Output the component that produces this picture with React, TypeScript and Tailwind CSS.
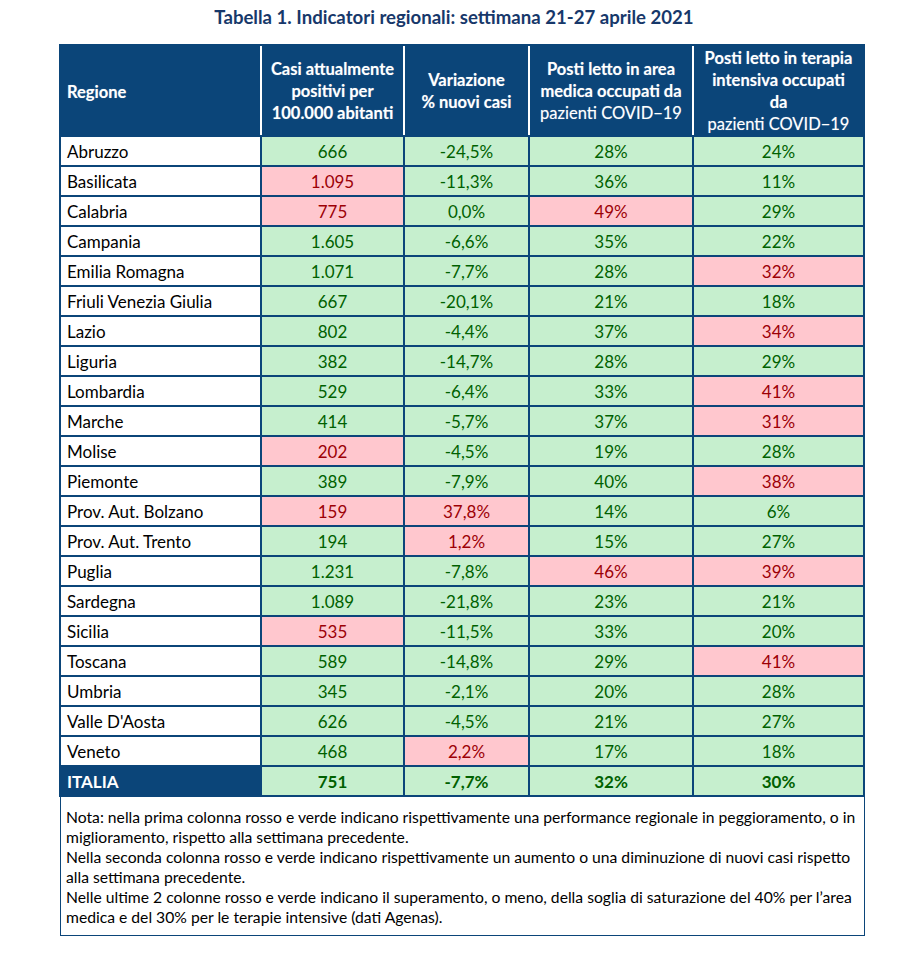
import React from 'react';

type Tone = 'g' | 'r';
type Cell = [string, Tone];

interface Row {
    regione: string;
    cells: Cell[];
}

const rows: Row[] = [
    { regione: 'Abruzzo', cells: [['666', 'g'], ['-24,5%', 'g'], ['28%', 'g'], ['24%', 'g']] },
    { regione: 'Basilicata', cells: [['1.095', 'r'], ['-11,3%', 'g'], ['36%', 'g'], ['11%', 'g']] },
    { regione: 'Calabria', cells: [['775', 'r'], ['0,0%', 'g'], ['49%', 'r'], ['29%', 'g']] },
    { regione: 'Campania', cells: [['1.605', 'g'], ['-6,6%', 'g'], ['35%', 'g'], ['22%', 'g']] },
    { regione: 'Emilia Romagna', cells: [['1.071', 'g'], ['-7,7%', 'g'], ['28%', 'g'], ['32%', 'r']] },
    { regione: 'Friuli Venezia Giulia', cells: [['667', 'g'], ['-20,1%', 'g'], ['21%', 'g'], ['18%', 'g']] },
    { regione: 'Lazio', cells: [['802', 'g'], ['-4,4%', 'g'], ['37%', 'g'], ['34%', 'r']] },
    { regione: 'Liguria', cells: [['382', 'g'], ['-14,7%', 'g'], ['28%', 'g'], ['29%', 'g']] },
    { regione: 'Lombardia', cells: [['529', 'g'], ['-6,4%', 'g'], ['33%', 'g'], ['41%', 'r']] },
    { regione: 'Marche', cells: [['414', 'g'], ['-5,7%', 'g'], ['37%', 'g'], ['31%', 'r']] },
    { regione: 'Molise', cells: [['202', 'r'], ['-4,5%', 'g'], ['19%', 'g'], ['28%', 'g']] },
    { regione: 'Piemonte', cells: [['389', 'g'], ['-7,9%', 'g'], ['40%', 'g'], ['38%', 'r']] },
    { regione: 'Prov. Aut. Bolzano', cells: [['159', 'r'], ['37,8%', 'r'], ['14%', 'g'], ['6%', 'g']] },
    { regione: 'Prov. Aut. Trento', cells: [['194', 'g'], ['1,2%', 'r'], ['15%', 'g'], ['27%', 'g']] },
    { regione: 'Puglia', cells: [['1.231', 'g'], ['-7,8%', 'g'], ['46%', 'r'], ['39%', 'r']] },
    { regione: 'Sardegna', cells: [['1.089', 'g'], ['-21,8%', 'g'], ['23%', 'g'], ['21%', 'g']] },
    { regione: 'Sicilia', cells: [['535', 'r'], ['-11,5%', 'g'], ['33%', 'g'], ['20%', 'g']] },
    { regione: 'Toscana', cells: [['589', 'g'], ['-14,8%', 'g'], ['29%', 'g'], ['41%', 'r']] },
    { regione: 'Umbria', cells: [['345', 'g'], ['-2,1%', 'g'], ['20%', 'g'], ['28%', 'g']] },
    { regione: "Valle D'Aosta", cells: [['626', 'g'], ['-4,5%', 'g'], ['21%', 'g'], ['27%', 'g']] },
    { regione: 'Veneto', cells: [['468', 'g'], ['2,2%', 'r'], ['17%', 'g'], ['18%', 'g']] },
];

const italia: Cell[] = [['751', 'g'], ['-7,7%', 'g'], ['32%', 'g'], ['30%', 'g']];

const cols = 'grid grid-cols-[199px_141px_123px_162px_169px]';

const toneClass = (tone: Tone) =>
    tone === 'g' ? 'bg-[#c6efce] text-[#006100]' : 'bg-[#ffc7ce] text-[#9c0006]';

const noteLines = [
    'Nota: nella prima colonna rosso e verde indicano rispettivamente una performance regionale in peggioramento, o in',
    'miglioramento, rispetto alla settimana precedente.',
    'Nella seconda colonna rosso e verde indicano rispettivamente un aumento o una diminuzione di nuovi casi rispetto',
    'alla settimana precedente.',
    'Nelle ultime 2 colonne rosso e verde indicano il superamento, o meno, della soglia di saturazione del 40% per l\u2019area',
    'medica e del 30% per le terapie intensive (dati Agenas).',
];

const App: React.FC = () => {
    return (
        <div className="w-[908px] h-[964px] bg-white font-['Lato',sans-serif] text-black">
            <h1 className="h-[44px] pt-[4px] text-center text-[18.6px] font-bold text-[#17386a] leading-[26px]">
                Tabella 1. Indicatori regionali: settimana 21-27 aprile 2021
            </h1>

            <div className="ml-[59px] w-[806px]">
                {/* header */}
                <div className="bg-[#0b4579] p-[2px]">
                    <div className={`${cols} h-[89px] gap-x-[2px] bg-white text-white text-[16.5px] leading-[22px] [text-shadow:0_0_1px_rgba(255,255,255,0.4)]`}>
                        <div className="bg-[#0b4579] flex items-center pl-[6px] pt-[2px] font-bold">Regione</div>
                        <div className="bg-[#0b4579] flex items-center justify-center text-center font-bold">
                            Casi attualmente<br />positivi per<br />100.000 abitanti
                        </div>
                        <div className="bg-[#0b4579] flex items-center justify-center text-center font-bold">
                            Variazione<br />% nuovi casi
                        </div>
                        <div className="bg-[#0b4579] flex flex-col items-center justify-center text-center">
                            <span className="font-bold">Posti letto in area</span>
                            <span className="font-bold">medica occupati da</span>
                            <span>pazienti COVID−19</span>
                        </div>
                        <div className="bg-[#0b4579] flex flex-col items-center justify-center text-center">
                            <span className="font-bold">Posti letto in terapia</span>
                            <span className="font-bold">intensiva occupati</span>
                            <span className="font-bold">da</span>
                            <span>pazienti COVID−19</span>
                        </div>
                    </div>
                </div>

                {/* body */}
                <div className={`${cols} gap-[2px] bg-[#0b4579] px-[2px] pb-[2px] text-[17px]`}>
                    {rows.map(row => (
                        <React.Fragment key={row.regione}>
                            <div className="h-[28px] bg-white flex items-center pl-[6px] pt-[2px] whitespace-nowrap">{row.regione}</div>
                            {row.cells.map(([value, tone], i) => (
                                <div key={i} className={`h-[28px] flex items-center justify-center pt-[2px] ${toneClass(tone)}`}>
                                    {value}
                                </div>
                            ))}
                        </React.Fragment>
                    ))}
                    <div className="h-[28px] bg-[#0b4579] flex items-center pl-[6px] pt-[2px] font-bold text-white">ITALIA</div>
                    {italia.map(([value, tone], i) => (
                        <div key={i} className={`h-[28px] flex items-center justify-center pt-[2px] font-bold ${toneClass(tone)}`}>
                            {value}
                        </div>
                    ))}
                </div>

                {/* note */}
                <div className="ml-[1px] w-[805px] h-[139px] border border-t-0 border-[#0b4579] pl-[5px] pt-[10px] text-[15.7px] leading-[20px]">
                    {noteLines.map(line => (
                        <div key={line} className="whitespace-nowrap">{line}</div>
                    ))}
                </div>
            </div>
        </div>
    );
};

export default App;
